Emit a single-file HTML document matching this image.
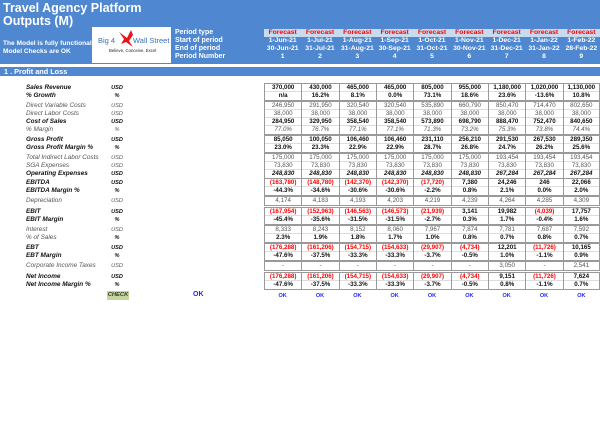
<!DOCTYPE html>
<html><head><meta charset="utf-8"><style>
*{margin:0;padding:0;box-sizing:border-box}
body{width:600px;height:425px;background:#fff;position:relative;overflow:hidden;font-family:"Liberation Sans",Arial,sans-serif}
.hdr{position:absolute;left:0;top:0;width:600px;height:64px;background:#4f87d0}
.t{position:absolute;left:3px;color:#fff;font-weight:bold;font-size:12.5px;line-height:14px}
.w{position:absolute;color:#fff;font-weight:bold;font-size:7px;line-height:8px;white-space:nowrap}
.logo{position:absolute;left:92px;top:27px;width:79px;height:36px;background:#fff}
.fc{position:absolute;left:264px;top:29px;width:336px;height:8px;background:#c9d9ee}
.pr{position:absolute;left:264px;width:336px;height:8px;display:grid;grid-template-columns:repeat(9,1fr);font-size:6.8px;font-weight:bold;color:#fff;text-align:center;line-height:8px;overflow:hidden}
.sec{position:absolute;left:0;top:67px;width:600px;height:9px;background:#4f87d0;color:#fff;font-weight:bold;font-size:7.3px;line-height:9px;padding-left:4px}
.lb{position:absolute;left:26px;font-size:6.4px;line-height:8px;font-style:italic;color:#555}
.u{position:absolute;left:106px;width:22px;text-align:center;font-size:5.6px;line-height:8px;font-style:italic;color:#555}
.b{font-weight:bold;color:#111}
.g{position:absolute;left:264px;width:336px;border-top:1px solid #999;border-bottom:1px solid #999}
.r{display:grid;grid-template-columns:repeat(9,1fr);height:7.9px;line-height:7.9px;font-size:6.2px;text-align:center;color:#555;border-bottom:1px solid #ddd}
.r:last-child{border-bottom:none}
.r span{border-left:1px solid #999}
.r span:last-child{border-right:1px solid #999}
.r.b{color:#111}
.r.i{font-style:italic}
.red{color:#f00}
</style></head><body>
<div class="hdr"></div>
<div class="t" style="top:1px">Travel Agency Platform</div>
<div class="t" style="top:14px">Outputs (M)</div>
<div class="logo">
<div style="position:absolute;left:6px;top:9px;font-size:7.5px;color:#3a6fc0">Big 4</div>
<div style="position:absolute;left:41px;top:9px;font-size:7.5px;color:#3a6fc0">Wall Street</div>
<svg style="position:absolute;left:25px;top:2px" width="20" height="20" viewBox="0 0 20 20"><path d="M2 3 L10 9 L14 1 L16 6 L12 12 L16 18 L9 13 L4 15 L7 10 Z" fill="#e8141a"/></svg>
<div style="position:absolute;left:17px;top:21px;font-size:4.3px;color:#222">Believe, Conceive, Excel</div>
</div>
<div class="w" style="left:3px;top:40px;font-size:6.6px">The Model is fully functional</div>
<div class="w" style="left:3px;top:48px;font-size:6.6px">Model Checks are OK</div>
<div class="w" style="left:175px;top:29px">Period type</div>
<div class="w" style="left:175px;top:37px">Start of period</div>
<div class="w" style="left:175px;top:45px">End of period</div>
<div class="w" style="left:175px;top:53px">Period Number</div>
<div class="fc"></div>
<div class="pr" style="top:29px;color:#f00"><span>Forecast</span><span>Forecast</span><span>Forecast</span><span>Forecast</span><span>Forecast</span><span>Forecast</span><span>Forecast</span><span>Forecast</span><span>Forecast</span></div>
<div class="pr" style="top:37px"><span>1-Jun-21</span><span>1-Jul-21</span><span>1-Aug-21</span><span>1-Sep-21</span><span>1-Oct-21</span><span>1-Nov-21</span><span>1-Dec-21</span><span>1-Jan-22</span><span>1-Feb-22</span></div>
<div class="pr" style="top:45px"><span>30-Jun-21</span><span>31-Jul-21</span><span>31-Aug-21</span><span>30-Sep-21</span><span>31-Oct-21</span><span>30-Nov-21</span><span>31-Dec-21</span><span>31-Jan-22</span><span>28-Feb-22</span></div>
<div class="pr" style="top:53px"><span>1</span><span>2</span><span>3</span><span>4</span><span>5</span><span>6</span><span>7</span><span>8</span><span>9</span></div>
<div class="sec">1 . Profit and Loss</div>

<div class="lb b" style="top:84px">Sales Revenue</div><div class="u b" style="top:84px">USD</div>
<div class="lb b" style="top:92px">% Growth</div><div class="u b" style="top:92px">%</div>
<div class="lb" style="top:102px">Direct Variable Costs</div><div class="u" style="top:102px">USD</div>
<div class="lb" style="top:110px">Direct Labor Costs</div><div class="u" style="top:110px">USD</div>
<div class="lb b" style="top:118px">Cost of Sales</div><div class="u b" style="top:118px">USD</div>
<div class="lb" style="top:126px">% Margin</div><div class="u" style="top:126px">%</div>
<div class="lb b" style="top:136px">Gross Profit</div><div class="u b" style="top:136px">USD</div>
<div class="lb b" style="top:144px">Gross Profit Margin %</div><div class="u b" style="top:144px">%</div>
<div class="lb" style="top:154px">Total Indirect Labor Costs</div><div class="u" style="top:154px">USD</div>
<div class="lb" style="top:162px">SGA Expenses</div><div class="u" style="top:162px">USD</div>
<div class="lb b" style="top:170px">Operating Expenses</div><div class="u b" style="top:170px">USD</div>
<div class="lb b" style="top:179px">EBITDA</div><div class="u b" style="top:179px">USD</div>
<div class="lb b" style="top:187px">EBITDA Margin %</div><div class="u b" style="top:187px">%</div>
<div class="lb" style="top:197px">Depreciation</div><div class="u" style="top:197px">USD</div>
<div class="lb b" style="top:208px">EBIT</div><div class="u b" style="top:208px">USD</div>
<div class="lb b" style="top:216px">EBIT Margin</div><div class="u b" style="top:216px">%</div>
<div class="lb" style="top:226px">Interest</div><div class="u" style="top:226px">USD</div>
<div class="lb" style="top:234px">% of Sales</div><div class="u b" style="top:234px">%</div>
<div class="lb b" style="top:244px">EBT</div><div class="u b" style="top:244px">USD</div>
<div class="lb b" style="top:252px">EBT Margin</div><div class="u b" style="top:252px">%</div>
<div class="lb" style="top:262px">Corporate Income Taxes</div><div class="u" style="top:262px">USD</div>
<div class="lb b" style="top:273px">Net Income</div><div class="u b" style="top:273px">USD</div>
<div class="lb b" style="top:281px">Net Income Margin %</div><div class="u b" style="top:281px">%</div>

<div class="g" style="top:83px">
<div class="r b"><span>370,000</span><span>430,000</span><span>465,000</span><span>465,000</span><span>805,000</span><span>955,000</span><span>1,180,000</span><span>1,020,000</span><span>1,130,000</span></div>
<div class="r b"><span>n/a</span><span>16.2%</span><span>8.1%</span><span>0.0%</span><span>73.1%</span><span>18.6%</span><span>23.6%</span><span>-13.6%</span><span>10.8%</span></div>
</div>
<div class="g" style="top:101px">
<div class="r"><span>246,950</span><span>291,950</span><span>320,540</span><span>320,540</span><span>535,890</span><span>660,790</span><span>850,470</span><span>714,470</span><span>802,650</span></div>
<div class="r"><span>38,000</span><span>38,000</span><span>38,000</span><span>38,000</span><span>38,000</span><span>38,000</span><span>38,000</span><span>38,000</span><span>38,000</span></div>
<div class="r b"><span>284,950</span><span>329,950</span><span>358,540</span><span>358,540</span><span>573,890</span><span>698,790</span><span>888,470</span><span>752,470</span><span>840,650</span></div>
<div class="r i"><span>77.0%</span><span>76.7%</span><span>77.1%</span><span>77.1%</span><span>71.3%</span><span>73.2%</span><span>75.3%</span><span>73.8%</span><span>74.4%</span></div>
</div>
<div class="g" style="top:135px">
<div class="r b"><span>85,050</span><span>100,050</span><span>106,460</span><span>106,460</span><span>231,110</span><span>256,210</span><span>291,530</span><span>267,530</span><span>289,350</span></div>
<div class="r b"><span>23.0%</span><span>23.3%</span><span>22.9%</span><span>22.9%</span><span>28.7%</span><span>26.8%</span><span>24.7%</span><span>26.2%</span><span>25.6%</span></div>
</div>
<div class="g" style="top:153px">
<div class="r"><span>175,000</span><span>175,000</span><span>175,000</span><span>175,000</span><span>175,000</span><span>175,000</span><span>193,454</span><span>193,454</span><span>193,454</span></div>
<div class="r"><span>73,830</span><span>73,830</span><span>73,830</span><span>73,830</span><span>73,830</span><span>73,830</span><span>73,830</span><span>73,830</span><span>73,830</span></div>
<div class="r b i"><span>248,830</span><span>248,830</span><span>248,830</span><span>248,830</span><span>248,830</span><span>248,830</span><span>267,284</span><span>267,284</span><span>267,284</span></div>
</div>
<div class="g" style="top:178px">
<div class="r b"><span class="red">(163,780)</span><span class="red">(148,780)</span><span class="red">(142,370)</span><span class="red">(142,370)</span><span class="red">(17,720)</span><span>7,380</span><span>24,246</span><span>246</span><span>22,066</span></div>
<div class="r b"><span>-44.3%</span><span>-34.6%</span><span>-30.6%</span><span>-30.6%</span><span>-2.2%</span><span>0.8%</span><span>2.1%</span><span>0.0%</span><span>2.0%</span></div>
</div>
<div class="g" style="top:196px">
<div class="r"><span>4,174</span><span>4,183</span><span>4,193</span><span>4,203</span><span>4,219</span><span>4,239</span><span>4,264</span><span>4,285</span><span>4,309</span></div>
</div>
<div class="g" style="top:207px">
<div class="r b"><span class="red">(167,954)</span><span class="red">(152,963)</span><span class="red">(146,563)</span><span class="red">(146,573)</span><span class="red">(21,939)</span><span>3,141</span><span>19,982</span><span class="red">(4,039)</span><span>17,757</span></div>
<div class="r b"><span>-45.4%</span><span>-35.6%</span><span>-31.5%</span><span>-31.5%</span><span>-2.7%</span><span>0.3%</span><span>1.7%</span><span>-0.4%</span><span>1.6%</span></div>
</div>
<div class="g" style="top:225px">
<div class="r"><span>8,333</span><span>8,243</span><span>8,152</span><span>8,060</span><span>7,967</span><span>7,874</span><span>7,781</span><span>7,687</span><span>7,592</span></div>
<div class="r b"><span>2.3%</span><span>1.9%</span><span>1.8%</span><span>1.7%</span><span>1.0%</span><span>0.8%</span><span>0.7%</span><span>0.8%</span><span>0.7%</span></div>
</div>
<div class="g" style="top:243px">
<div class="r b"><span class="red">(176,288)</span><span class="red">(161,206)</span><span class="red">(154,715)</span><span class="red">(154,633)</span><span class="red">(29,907)</span><span class="red">(4,734)</span><span>12,201</span><span class="red">(11,726)</span><span>10,165</span></div>
<div class="r b"><span>-47.6%</span><span>-37.5%</span><span>-33.3%</span><span>-33.3%</span><span>-3.7%</span><span>-0.5%</span><span>1.0%</span><span>-1.1%</span><span>0.9%</span></div>
</div>
<div class="g" style="top:261px">
<div class="r"><span>-</span><span>-</span><span>-</span><span>-</span><span>-</span><span>-</span><span>3,050</span><span>-</span><span>2,541</span></div>
</div>
<div class="g" style="top:272px">
<div class="r b"><span class="red">(176,288)</span><span class="red">(161,206)</span><span class="red">(154,715)</span><span class="red">(154,633)</span><span class="red">(29,907)</span><span class="red">(4,734)</span><span>9,151</span><span class="red">(11,726)</span><span>7,624</span></div>
<div class="r b"><span>-47.6%</span><span>-37.5%</span><span>-33.3%</span><span>-33.3%</span><span>-3.7%</span><span>-0.5%</span><span>0.8%</span><span>-1.1%</span><span>0.7%</span></div>
</div>

<div style="position:absolute;left:107px;top:291px;width:22px;height:9px;background:#c4d79b;font-size:5.8px;font-weight:bold;font-style:italic;color:#333;text-align:center;line-height:9px">CHECK</div>
<div style="position:absolute;left:193px;top:291px;color:#22f;font-weight:bold;font-size:7px">OK</div>
<div class="pr" style="top:292px;color:#22f;font-size:5.5px"><span>OK</span><span>OK</span><span>OK</span><span>OK</span><span>OK</span><span>OK</span><span>OK</span><span>OK</span><span>OK</span></div>
</body></html>
